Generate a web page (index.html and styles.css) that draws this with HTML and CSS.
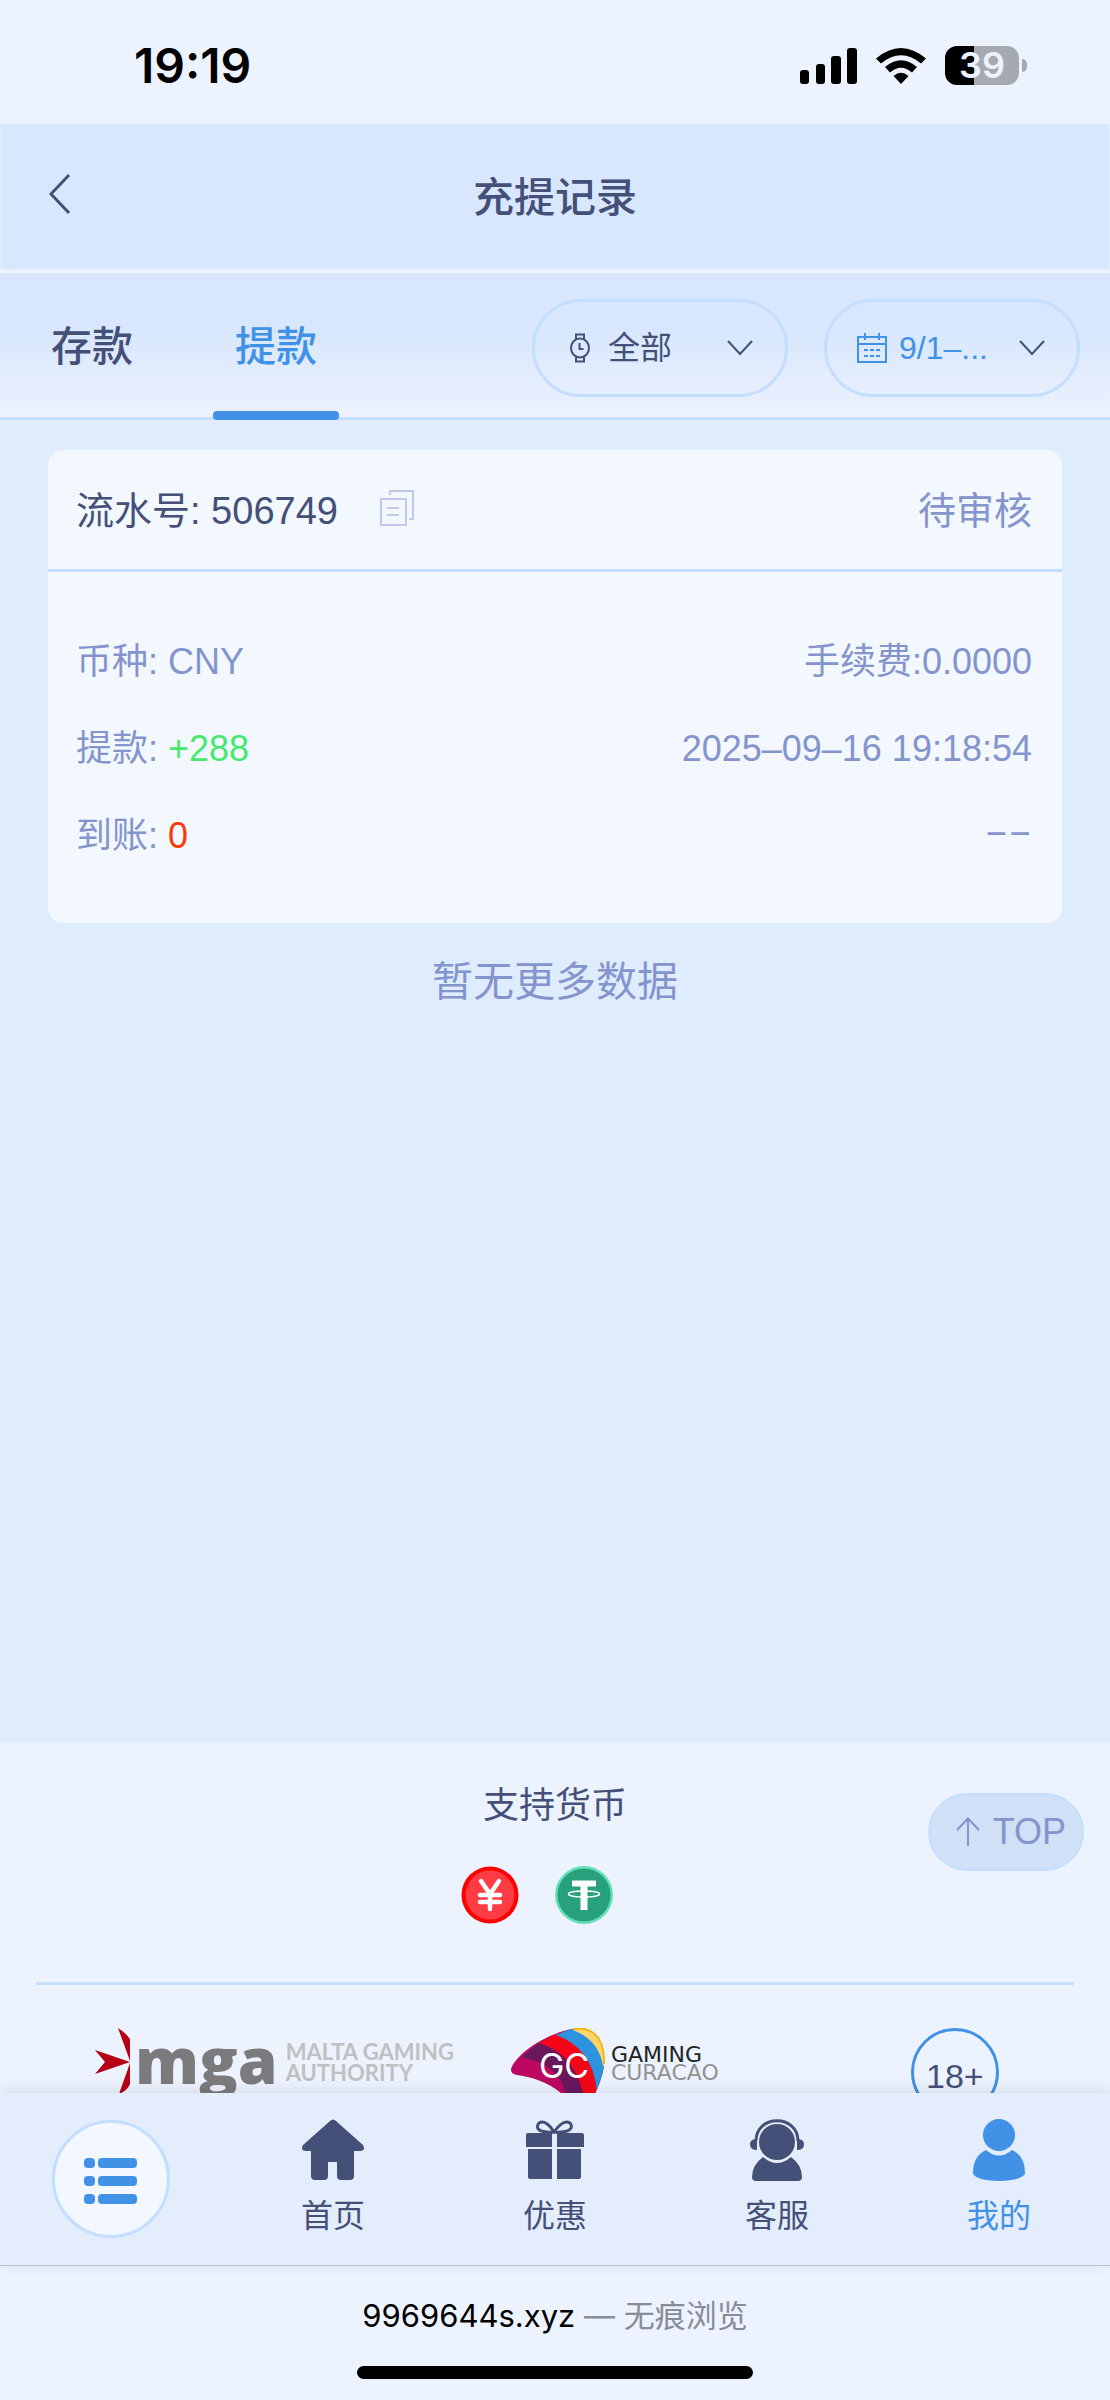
FILE: index.html
```html
<!DOCTYPE html>
<html lang="zh-CN">
  <head>
    <meta charset="UTF-8" />
    <meta name="viewport" content="width=device-width, initial-scale=1.0" />
    <title>充提记录</title>
    <link rel="stylesheet" href="styles.css">
  </head>

  <body>
    <div class="statusbar">
      <span class="clock">19:19</span>
      <div class="status-icons">
        <svg width="57" height="36" viewBox="0 0 57 36">
          <rect x="0" y="22" width="9" height="14" rx="3" />
          <rect x="16" y="16" width="9" height="20" rx="3" />
          <rect x="31" y="8" width="10" height="28" rx="3" />
          <rect x="47" y="0" width="10" height="36" rx="3" />
        </svg>
        <svg width="50" height="36" viewBox="0 0 50 36">
          <path d="M0 10.500Q25 -10.500 50 10.500L45 15.500Q25 -1 5 15.500Z" />
          <path d="M9 19Q25 5.500 41 19L36 24.500Q25 15 14 24.500Z" />
          <path d="M17.500 28Q25 21.500 32.500 28L25 36Z" />
        </svg>
        <div class="battery"><span class="level">39</span></div>
      </div>
    </div>

    <header class="header">
      <a class="back" href="#" aria-label="返回">
        <svg width="22" height="42" viewBox="0 0 22 42"><path d="M20 2L2 21L20 40" /></svg>
      </a>
      <h1 class="title">充提记录</h1>
    </header>

    <div class="tabbar">
      <nav class="tabs">
        <a class="tab" href="#">存款</a>
        <a class="tab active" href="#">提款</a>
      </nav>
      <div class="filters">
        <label class="filter">
          <svg class="line" width="20" height="30" viewBox="0 0 20 30">
            <ellipse cx="10" cy="15" rx="9" ry="9.500" />
            <path d="M6 6V1.500H14V6M6 24V28.500H14V24M9.500 10V16H13.500" />
          </svg>
          <select class="filter-text" aria-label="类型">
            <option>全部</option>
          </select>
          <svg class="arrow" width="26" height="16" viewBox="0 0 26 16"><path d="M1 1L13 14L25 1" /></svg>
        </label>
        <button class="filter date" type="button">
          <svg class="line" width="30" height="30" viewBox="0 0 30 30">
            <path d="M1 4H29V29H1ZM1 11H29M8 0V7M22 0V7" />
            <path d="M7 17H23M7 23H23" stroke-dasharray="4 2" />
          </svg>
          <span class="filter-text">9/1–...</span>
          <svg class="arrow" width="26" height="16" viewBox="0 0 26 16"><path d="M1 1L13 14L25 1" /></svg>
        </button>
      </div>
    </div>

    <div class="scroll">
      <main class="records">
        <div class="card">
          <div class="card-head">
            <span>流水号: 506749</span>
            <button class="copy" type="button" aria-label="复制">
              <svg width="34" height="36" viewBox="0 0 34 36">
                <path d="M1 9H26V35H1ZM10 5V1H33V29H29M7 18H19M7 25H19" />
              </svg>
            </button>
            <span class="state">待审核</span>
          </div>
          <div class="card-body">
            <div class="row"><span>币种: CNY</span><span>手续费:0.0000</span></div>
            <div class="row"><span>提款: <b class="plus">+288</b></span><span>2025–09–16 19:18:54</span></div>
            <div class="row"><span>到账: <b class="zero">0</b></span><span class="empty">––</span></div>
          </div>
        </div>
        <p class="nomore">暂无更多数据</p>
      </main>

      <footer class="footer">
        <h2 class="footer-title">支持货币</h2>
        <div class="coins">
          <svg width="58" height="58" viewBox="0 0 58 58">
            <circle cx="29" cy="29" r="28.500" fill="#fe0000" />
            <circle cx="29" cy="29" r="24.500" fill="#ff3b44" />
            <path d="M20 15L29 28L38 15M29 28V43M19 29H39M19 36H39" fill="none" stroke="#fff" stroke-width="4.500" stroke-linecap="round" />
          </svg>
          <svg width="58" height="58" viewBox="0 0 58 58">
            <circle cx="29" cy="29" r="29" fill="#63dfba" />
            <circle cx="29" cy="29" r="26.500" fill="#26a17b" />
            <path d="M17 14.500H41V20.500H32.500V44H25.500V20.500H17Z" fill="#fff" />
            <ellipse cx="29" cy="28" rx="15.500" ry="3" fill="none" stroke="#fff" stroke-width="1.500" />
          </svg>
        </div>
        <a class="totop" href="#">
          <svg width="26" height="30" viewBox="0 0 26 30"><path d="M13 29V2M2 13L13 1.500L24 13" /></svg>
          TOP
        </a>
        <div class="licenses">
          <div class="mga">
            <svg width="36" height="66" viewBox="0 0 36 66">
              <path fill="#b50015" d="M35 33L23 0Q31 5 35 11ZM35 34L0 22L10 34L0 46ZM35 35L24 66Q32 63 35 56Z" />
            </svg>
            <span class="mga-name">mga</span>
            <span class="mga-full">MALTA GAMING<br>AUTHORITY</span>
          </div>
          <div class="gc">
            <svg width="94" height="74" viewBox="0 0 94 74">
              <defs>
                <clipPath id="leaf"><path d="M0 41C6 24 38 5 61 1C80 -3 92 8 93 30C94 44 88 58 80 74H60C42 56 26 50 6 47C1 46 0 44 0 41Z" /></clipPath>
              </defs>
              <g clip-path="url(#leaf)">
                <path fill="#bb0860" d="M0 0H94V74H0Z" />
                <path fill="#68195c" d="M10 29L28 15Q66 26 74 74H56Q52 36 10 29Z" />
                <path fill="#f60516" d="M28 15L45 6Q82 20 86 64L80 74H74Q66 26 28 15Z" />
                <path fill="#2c93df" d="M45 7L62 0Q92 14 94 40L86 64Q82 20 45 7Z" />
                <path fill="#ffd46a" d="M62 2L70 0H94V38H92Q88 12 62 2Z" />
              </g>
              <path d="M62 1C80 -2 92 8 93 30V36" fill="none" stroke="#f5b417" stroke-width="2" />
              <text class="gc-mark" x="28" y="50">GC</text>
            </svg>
            <span class="gc-name">GAMING<br><span class="gc-place">CURACAO</span></span>
          </div>
          <div class="age">18+</div>
        </div>
      </footer>
    </div>

    <nav class="nav">
      <a class="nav-menu" href="#" aria-label="菜单">
        <svg width="54" height="50" viewBox="0 -4 54 50">
          <rect x="0" y="0" width="11" height="10" rx="4" /><rect x="14" y="0" width="39" height="10" rx="4" />
          <rect x="0" y="18" width="11" height="10" rx="4" /><rect x="14" y="18" width="39" height="10" rx="4" />
          <rect x="0" y="36" width="11" height="10" rx="4" /><rect x="14" y="36" width="39" height="10" rx="4" />
        </svg>
      </a>
      <a class="nav-item" href="#">
        <svg width="64" height="62" viewBox="0 0 64 62">
          <path d="M29 2Q32 -1 35 2L62 26Q65 32 59 32H53V57Q53 61 49 61H40Q36 61 36 57V43H27V57Q27 61 23 61H14Q10 61 10 57V32H5Q-1 32 2 26Z" />
        </svg>
        <span>首页</span>
      </a>
      <a class="nav-item" href="#">
        <svg width="64" height="62" viewBox="0 0 64 62">
          <path d="M5 14H29V28H3V16Q3 14 5 14ZM34 14H59Q61 14 61 16V28H34ZM5 30H29V60H7Q5 60 5 58ZM34 30H58V58Q58 60 56 60H34Z" />
          <path d="M31 13C27 6 21 1 16 4C12 9 15 14 31 13C47 14 51 9 47 4C42 1 36 6 31 13" fill="none" stroke="#445078" stroke-width="3" />
        </svg>
        <span>优惠</span>
      </a>
      <a class="nav-item" href="#">
        <svg width="64" height="62" viewBox="0 0 64 62">
          <ellipse cx="32" cy="23" rx="18" ry="18" />
          <path d="M18 38Q32 50 46 38Q57 46 57 58Q57 62 53 62H11Q7 62 7 58Q7 46 18 38Z" />
          <path d="M11 22C11 -5 53 -5 53 22" fill="none" stroke="#445078" stroke-width="3" />
          <path d="M10 20H12V31Q5 31 5 25Q5 21 10 20ZM54 20H52V31Q59 31 59 25Q59 21 54 20Z" />
        </svg>
        <span>客服</span>
      </a>
      <a class="nav-item current" href="#">
        <svg width="64" height="62" viewBox="0 0 64 62">
          <circle cx="32" cy="16" r="16" />
          <path d="M19 31Q32 42 45 31Q58 37 58 54C58 58 48 62 32 62C16 62 6 58 6 54Q6 37 19 31Z" />
        </svg>
        <span>我的</span>
      </a>
    </nav>

    <div class="browser">
      <p class="url">9969644s.xyz <span class="private">— 无痕浏览</span></p>
      <div class="home-line"></div>
    </div>
  </body>
</html>
```

FILE: styles.css
```css
* {
  box-sizing: border-box;
  margin: 0;
  padding: 0;
}
body {
  display: flex;
  flex-direction: column;
  height: 100vh;
  background: #ecf3fe;
  color: #445078;
  font-family: "Liberation Sans", "Noto Sans CJK SC", sans-serif;
  font-size: 36px;
}
a {
  color: inherit;
  text-decoration: none;
}
button,
select {
  border: none;
  background: none;
  color: inherit;
  font: inherit;
}
svg {
  display: block;
  flex: none;
}

/* status bar */
.statusbar {
  display: flex;
  justify-content: space-between;
  align-items: center;
  flex: none;
  height: 123px;
  padding: 8px 91px 0 134px;
  color: #000;
  font-family: Inter, sans-serif;
}
.clock {
  font-size: 48px;
  font-weight: 600;
}
.status-icons {
  display: flex;
  align-items: center;
  gap: 19px;
}
.battery {
  position: relative;
  width: 74px;
  height: 39px;
  border-radius: 12px;
  background: linear-gradient(90deg, #000 39%, #a5aab2 39%);
}
.battery::after {
  content: "";
  position: absolute;
  top: 13px;
  right: -8px;
  width: 5px;
  height: 13px;
  border-radius: 0 6px 6px 0;
  background: #a5aab2;
}
.level {
  display: block;
  color: #ecf3fe;
  font-size: 36px;
  font-weight: 600;
  line-height: 39px;
  text-align: center;
}

/* header */
.header {
  display: grid;
  grid-template-columns: 1fr auto 1fr;
  align-items: center;
  flex: none;
  height: 147px;
  margin-bottom: 3px;
  padding: 0 48px 6px;
  border: 1px solid #e6effe;
  background: #d9e7fe;
}
.back svg {
  fill: none;
  stroke: #445078;
  stroke-width: 3;
}
.title {
  font-size: 41px;
  font-weight: 500;
}

/* tabs and filters */
.tabbar {
  display: flex;
  justify-content: space-between;
  flex: none;
  height: 147px;
  padding: 0 30px 0 29px;
  border-bottom: 3px solid #c3deff;
  background: linear-gradient(#d8e7fd 40%, #ecf2fe);
}
.tabs {
  display: flex;
  gap: 58px;
}
.tab {
  position: relative;
  padding: 2px 22px 0;
  font-size: 41px;
  font-weight: 500;
  line-height: 144px;
}
.tab.active {
  color: #4191e7;
}
.tab.active::after {
  content: "";
  position: absolute;
  left: 0;
  right: 0;
  bottom: -3px;
  height: 9px;
  border-radius: 4px;
  background: #4191e7;
}
.filters {
  display: flex;
  align-items: center;
  gap: 36px;
  padding-top: 6px;
}
.filter {
  display: flex;
  align-items: center;
  width: 256px;
  height: 98px;
  padding: 0 32px 0 35px;
  border: 3px solid #c3deff;
  border-radius: 49px;
  font-size: 32px;
}
.filter.date {
  padding: 0 32px 0 30px;
}
.filter-text {
  flex: 1;
  min-width: 0;
  padding-left: 18px;
  font-size: 32px;
  text-align: left;
  appearance: none;
}
.date .filter-text {
  padding-left: 12px;
}
.line {
  fill: none;
  stroke: #445078;
  stroke-width: 2;
}
.date .line {
  stroke: #4191e7;
}
.date .filter-text {
  color: #4191e7;
}
.arrow {
  fill: none;
  stroke: #445078;
  stroke-width: 2;
}

/* records */
.scroll {
  flex: 1;
  min-height: 0;
  overflow-y: auto;
  scrollbar-width: none;
}
.records {
  min-height: 1323px;
  padding: 30px 48px;
  background: #dfecfe;
}
.card {
  border-radius: 15px;
  background: #f3f8ff;
}
.card-head {
  display: flex;
  align-items: center;
  height: 122px;
  padding: 0 30px 4px 28px;
  border-bottom: 3px solid #c3deff;
  font-size: 38px;
}
.copy {
  margin-left: 42px;
}
.copy svg {
  fill: none;
  stroke: #c1c9e8;
  stroke-width: 2;
}
.state {
  margin-left: auto;
  color: #8494cd;
}
.card-body {
  padding: 46px 30px 44px 28px;
  color: #8494cd;
}
.row {
  display: flex;
  justify-content: space-between;
  line-height: 87px;
}
.plus,
.zero {
  font-weight: inherit;
}
.plus {
  color: #45ea6d;
}
.zero {
  color: #f93c07;
}
.empty {
  font-family: Roboto, sans-serif;
}
.nomore {
  margin-top: 29px;
  color: #8494cd;
  font-size: 41px;
  line-height: 60px;
  text-align: center;
}

/* footer */
.footer {
  position: relative;
  padding: 37px 36px 0;
}
.footer-title {
  font-size: 36px;
  font-weight: 400;
  line-height: 52px;
  text-align: center;
}
.coins {
  display: flex;
  justify-content: center;
  padding: 34px 0 58px;
  border-bottom: 3px solid #c3deff;
}
.coins svg {
  margin-right: 36px;
}
.totop {
  position: absolute;
  top: 50px;
  right: 26px;
  display: flex;
  align-items: center;
  gap: 12px;
  height: 78px;
  padding: 0 16px 0 25px;
  border: 2px solid #c3deff;
  border-radius: 39px;
  background: #d0e0f6;
  color: #8494cd;
}
.totop svg {
  fill: none;
  stroke: #8494cd;
  stroke-width: 2;
}
.licenses {
  display: grid;
  grid-template-columns: 5fr 5fr 2fr;
  padding: 43px 0 30px 59px;
}
.mga,
.gc {
  display: flex;
}
.mga-name {
  margin-left: 4px;
  color: #7b7b7d;
  font-family: "Open Sans", sans-serif;
  font-size: 64px;
  font-weight: 800;
  line-height: 64px;
}
.mga-full {
  margin: 13px 0 0 8px;
  color: #c0bfc1;
  font-family: Lato, sans-serif;
  font-size: 22px;
  font-weight: 700;
  line-height: 21px;
  white-space: nowrap;
}
.gc {
  padding-left: 8px;
}
.gc-mark {
  fill: #fff;
  font-family: Inter, sans-serif;
  font-size: 34px;
}
.gc-name {
  margin: 18px 0 0 6px;
  color: #222;
  font-family: "DejaVu Sans", sans-serif;
  font-size: 22px;
  line-height: 18px;
}
.gc-place {
  color: #929292;
}
.age {
  width: 88px;
  height: 88px;
  border: 3px solid #4191e7;
  border-radius: 50%;
  font-size: 34px;
  line-height: 90px;
  text-align: center;
}

/* bottom nav */
.nav {
  z-index: 1;
  display: grid;
  grid-template-columns: repeat(5, 1fr);
  align-items: center;
  justify-items: center;
  flex: none;
  height: 173px;
  border-bottom: 1px solid #bac0cc;
  background: #e4edfc;
  box-shadow: 0 -2px 14px rgba(0, 0, 0, .1);
}
.nav-menu {
  display: flex;
  align-items: center;
  justify-content: center;
  width: 118px;
  height: 118px;
  border: 3px solid #c3deff;
  border-radius: 50%;
  background: #f3f7ff;
  fill: #4191e7;
}
.nav-item {
  display: flex;
  flex-direction: column;
  align-items: center;
  gap: 12px;
  fill: #445078;
  font-size: 32px;
  line-height: 46px;
}
.nav-item.current {
  color: #4191e7;
  fill: #4191e7;
}

/* browser bar */
.browser {
  flex: none;
  height: 134px;
  padding-top: 28px;
  font-family: Inter, "Noto Sans CJK SC", sans-serif;
  font-size: 31px;
  line-height: 44px;
  text-align: center;
}
.url {
  color: #000;
}
.private {
  color: #878c98;
}
.home-line {
  width: 396px;
  height: 13px;
  margin: 28px auto 0;
  border-radius: 7px;
  background: #000;
}
```
